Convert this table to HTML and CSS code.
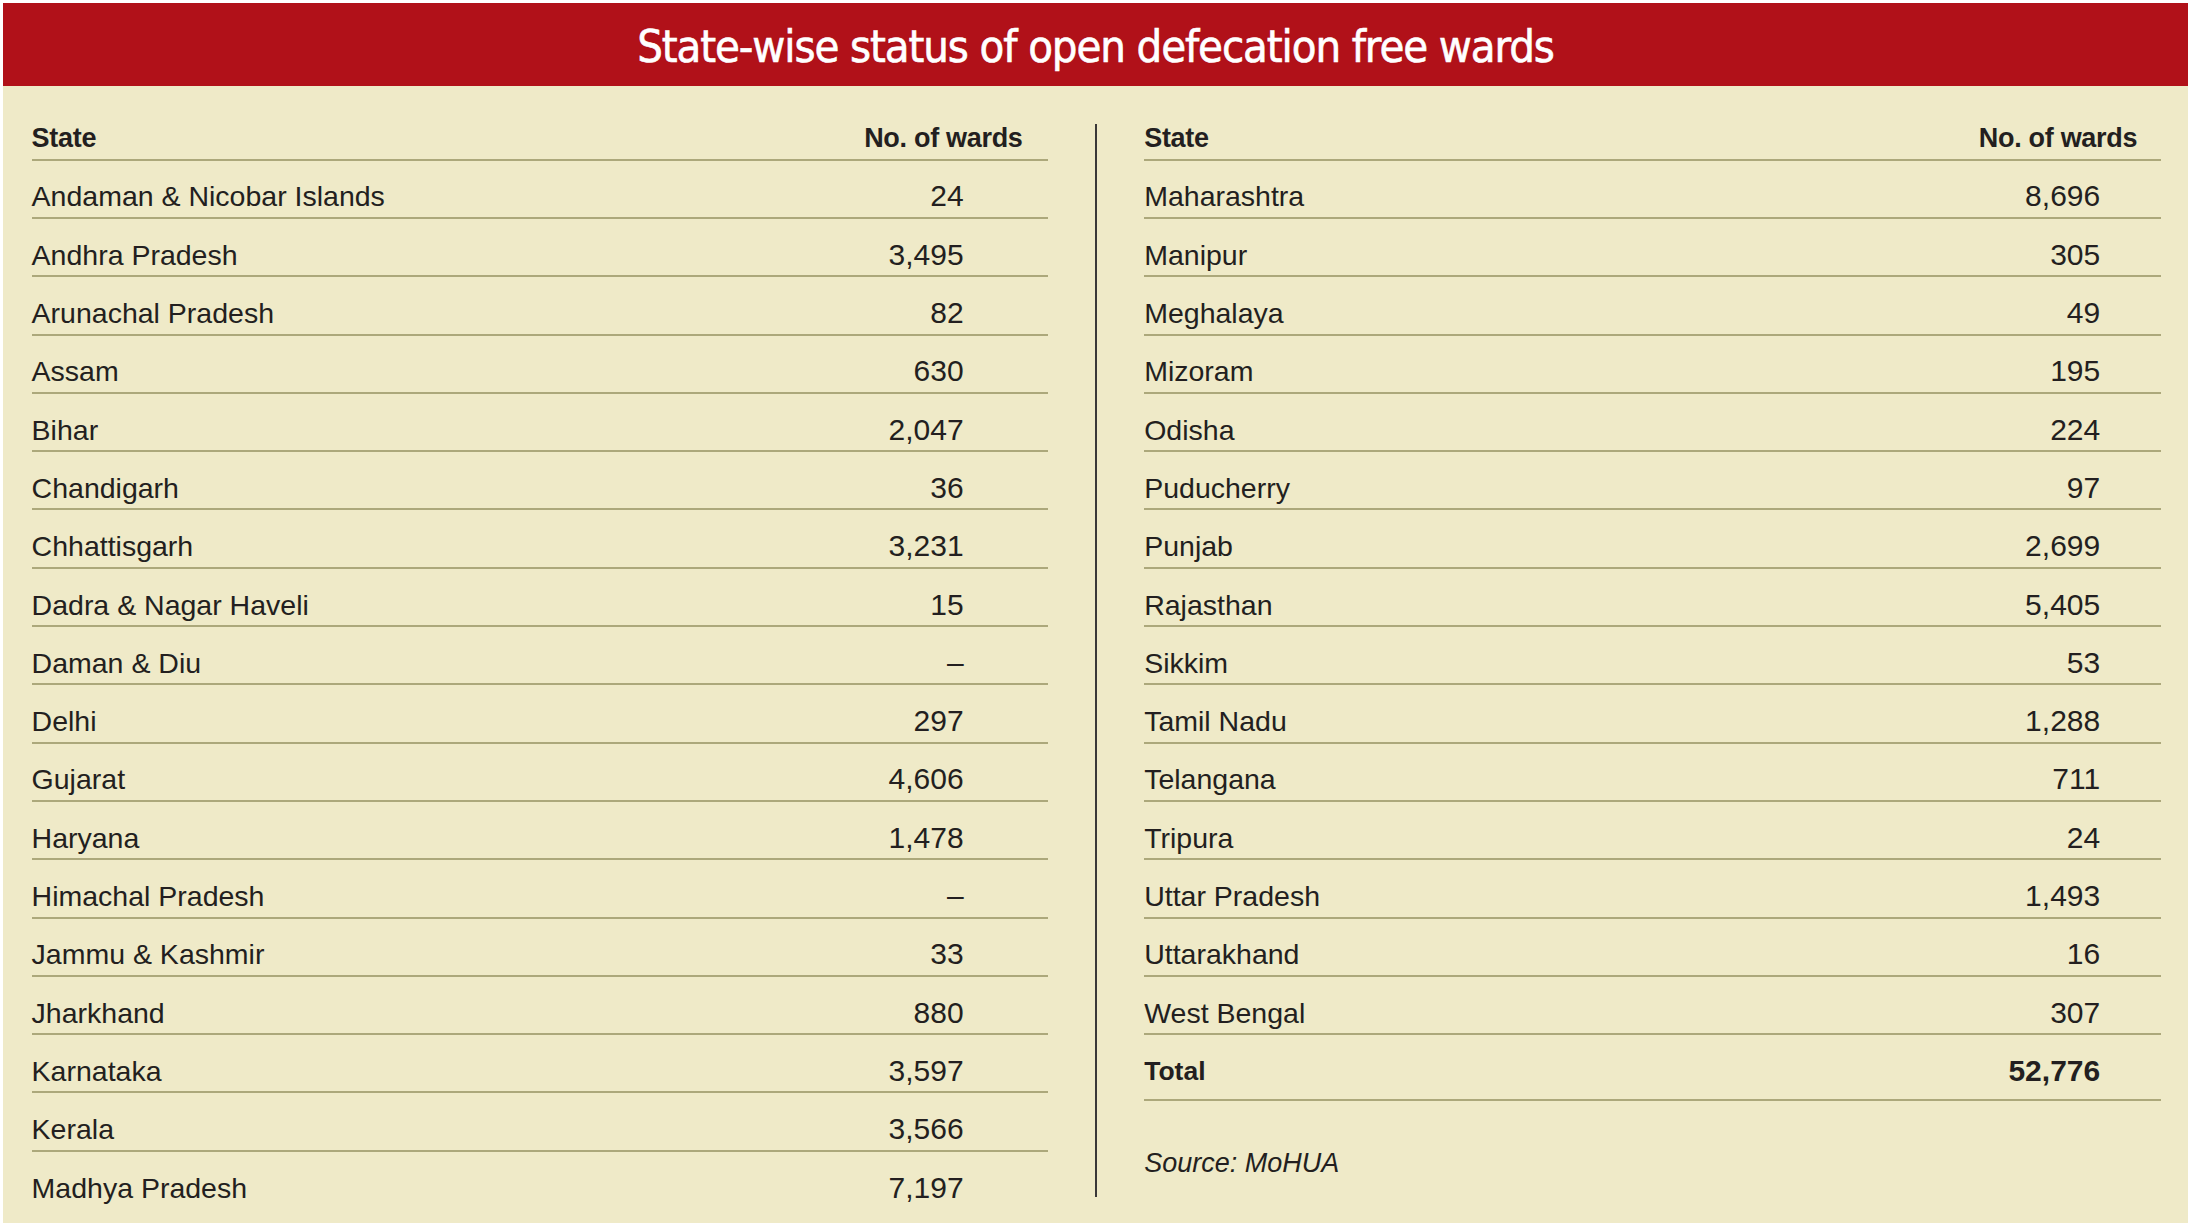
FILE: index.html
```html
<!DOCTYPE html>
<html lang="en">
<head>
<meta charset="utf-8">
<title>State-wise status of open defecation free wards</title>
<link rel="stylesheet" href="styles.css">
</head>
<body>
<div class="card">
  <h1 class="title">State-wise status of open defecation free wards</h1>
  <div class="body">
    <div class="col col-left">
      <div class="row head"><span>State</span><span class="hnum">No. of wards</span></div>
      <div class="row"><span>Andaman &amp; Nicobar Islands</span><span class="num">24</span></div>
      <div class="row"><span>Andhra Pradesh</span><span class="num">3,495</span></div>
      <div class="row"><span>Arunachal Pradesh</span><span class="num">82</span></div>
      <div class="row"><span>Assam</span><span class="num">630</span></div>
      <div class="row"><span>Bihar</span><span class="num">2,047</span></div>
      <div class="row"><span>Chandigarh</span><span class="num">36</span></div>
      <div class="row"><span>Chhattisgarh</span><span class="num">3,231</span></div>
      <div class="row"><span>Dadra &amp; Nagar Haveli</span><span class="num">15</span></div>
      <div class="row"><span>Daman &amp; Diu</span><span class="num">–</span></div>
      <div class="row"><span>Delhi</span><span class="num">297</span></div>
      <div class="row"><span>Gujarat</span><span class="num">4,606</span></div>
      <div class="row"><span>Haryana</span><span class="num">1,478</span></div>
      <div class="row"><span>Himachal Pradesh</span><span class="num">–</span></div>
      <div class="row"><span>Jammu &amp; Kashmir</span><span class="num">33</span></div>
      <div class="row"><span>Jharkhand</span><span class="num">880</span></div>
      <div class="row"><span>Karnataka</span><span class="num">3,597</span></div>
      <div class="row"><span>Kerala</span><span class="num">3,566</span></div>
      <div class="row last"><span>Madhya Pradesh</span><span class="num">7,197</span></div>
    </div>
    <div class="divider"></div>
    <div class="col col-right">
      <div class="row head"><span>State</span><span class="hnum">No. of wards</span></div>
      <div class="row"><span>Maharashtra</span><span class="num">8,696</span></div>
      <div class="row"><span>Manipur</span><span class="num">305</span></div>
      <div class="row"><span>Meghalaya</span><span class="num">49</span></div>
      <div class="row"><span>Mizoram</span><span class="num">195</span></div>
      <div class="row"><span>Odisha</span><span class="num">224</span></div>
      <div class="row"><span>Puducherry</span><span class="num">97</span></div>
      <div class="row"><span>Punjab</span><span class="num">2,699</span></div>
      <div class="row"><span>Rajasthan</span><span class="num">5,405</span></div>
      <div class="row"><span>Sikkim</span><span class="num">53</span></div>
      <div class="row"><span>Tamil Nadu</span><span class="num">1,288</span></div>
      <div class="row"><span>Telangana</span><span class="num">711</span></div>
      <div class="row"><span>Tripura</span><span class="num">24</span></div>
      <div class="row"><span>Uttar Pradesh</span><span class="num">1,493</span></div>
      <div class="row"><span>Uttarakhand</span><span class="num">16</span></div>
      <div class="row"><span>West Bengal</span><span class="num">307</span></div>
      <div class="row total"><span>Total</span><span class="num">52,776</span></div>
      <p class="source">Source: MoHUA</p>
    </div>
  </div>
</div>
</body>
</html>
```

FILE: styles.css
```css
html, body {
  margin: 0;
  padding: 0;
  background: #ffffff;
}

.card {
  margin: 3px;
  width: 2185px;
  height: 1220px;
  background: #efeac8;
  box-sizing: border-box;
  font-family: "Liberation Sans", Arial, sans-serif;
  color: #231f20;
}

.title {
  margin: 0;
  height: 83px;
  box-sizing: border-box;
  padding-top: 4px;
  background: #b11119;
  color: #ffffff;
  text-align: center;
  font-family: "DejaVu Sans Condensed", "DejaVu Sans", sans-serif;
  font-stretch: condensed;
  font-weight: normal;
  font-size: 45px;
  line-height: 79px;
  letter-spacing: -1.1px;
  -webkit-text-stroke: 0.6px #ffffff;
}

.body {
  display: flex;
  align-items: flex-start;
  padding-top: 16.4px;
  padding-left: 28.6px;
}

.col {
  display: flex;
  flex-direction: column;
}

.col-left {
  width: 1016px;
}

.col-right {
  width: 1017px;
  margin-left: 47px;
}

.divider {
  width: 2px;
  height: 1073px;
  margin-top: 21.6px;
  margin-left: 47.6px;
  background: #3a3838;
}

.row {
  display: flex;
  justify-content: space-between;
  align-items: flex-end;
  height: 58.3px;
  box-sizing: border-box;
  padding-bottom: 5.5px;
  border-bottom: 2px solid #aca87b;
  font-size: 28.5px;
  line-height: 30px;
}

.row.last {
  border-bottom-color: transparent;
}

.row .num {
  font-size: 30px;
}

.col-left .num {
  padding-right: 84px;
}

.col-right .num {
  padding-right: 61px;
}

.head {
  font-weight: bold;
  font-size: 27px;
  letter-spacing: -0.3px;
}

.col-left .hnum {
  padding-right: 25px;
}

.col-right .hnum {
  padding-right: 24px;
}

.row.total {
  height: 65.7px;
  padding-bottom: 13.2px;
  font-weight: bold;
  font-size: 26.5px;
}

.source {
  margin: 49px 0 0 0;
  font-style: italic;
  font-size: 27px;
  line-height: 1;
}
```
